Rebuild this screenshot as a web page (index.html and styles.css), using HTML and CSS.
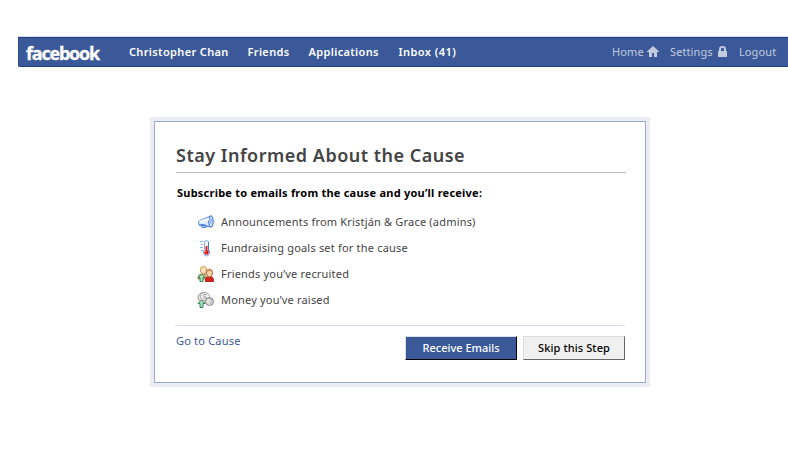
FILE: index.html
```html
<!DOCTYPE html>
<html lang="en">
<head>
<meta charset="utf-8">
<title>Facebook | Causes</title>
<link rel="stylesheet" href="styles.css">
</head>
<body>
<header class="navbar">
  <a class="logo">facebook</a>
  <nav class="primary">
    <a class="profile">Christopher Chan</a>
    <a class="friends">Friends</a>
    <a class="apps">Applications</a>
    <a class="inbox">Inbox (41)</a>
  </nav>
  <nav class="secondary">
    <a class="home"><span>Home</span><svg width="12" height="11" viewBox="0 0 12 11"><path d="M6 0l6 5.500V6h-2v5H7V7H5v4H2V6H0v-.5z"/></svg></a>
    <a class="settings"><span>Settings</span><svg width="9" height="11" viewBox="0 0 9 11"><path fill-rule="evenodd" d="M0 5h1V3q0-3 3.500-3T8 3v2h1v6H0zM3 5h3V3q0-1.300-1.500-1.300T3 3z"/></svg></a>
    <a class="logout"><span>Logout</span></a>
  </nav>
</header>
<main class="card">
  <div class="panel">
    <h1><span>Stay Informed About the Cause</span></h1>
    <h2><span>Subscribe to emails from the cause and you’ll receive:</span></h2>
    <ul>
      <li><svg width="18" height="18" viewBox="0 0 18 18"><path d="M1.500 8.500L5 6.500 13.500 3v11L8 12.500 2 12z" fill="#dceaff" stroke="#6e9ae8"/><path d="M4 11.500h4l1 3H5z" fill="#b9cff9" stroke="#638bd7"/><ellipse cx="14" cy="8.500" rx="2.200" ry="5.700" fill="#d4e3ff" stroke="#3262c4"/><path d="M3 9l9-3" stroke="#fff" stroke-width="2"/><path d="M2 12l10 1.500" stroke="#4777d2"/><path d="M14 5.500v5" stroke="#719cec"/></svg><span>Announcements from Kristján &amp; Grace (admins)</span></li>
      <li><svg width="18" height="18" viewBox="0 0 18 18"><path d="M3 2.500h3M4 5.500h2M3 8.500h3M4 11.500h2" stroke="#8cb4ef"/><path d="M7.500 2.500q2-2 4 0v8q1.500 1.500 1 4-.8 2.500-3 2.500t-3-2.500q-.5-2.500 1-4z" fill="#f1f6ff" stroke="#82a9e8"/><path d="M11.500 3v8l1 2" fill="none" stroke="#477ed1"/><path d="M9.500 7v7" stroke="#e4271b" stroke-width="2"/><circle cx="9.500" cy="13.500" r="2.300" fill="#d92017"/><path d="M8.500 12v1" stroke="#ff9c7c"/></svg><span>Fundraising goals set for the cause</span></li>
      <li><svg width="18" height="18" viewBox="0 0 18 18"><path d="M1 13q0-4 4-4h3l2 5H1z" fill="#e8bd75" stroke="#ae8147"/><path d="M8.500 16.500v-3q1-2 4-2h2q2 1 2 5z" fill="#d7241d" stroke="#b5231b"/><ellipse cx="6.500" cy="5" rx="3" ry="4" fill="#ffe2b8" stroke="#b98c50"/><path d="M3.500 5q0-4 3-4 3 0 3 3L7 3z" fill="#ecc88f"/><ellipse cx="12.500" cy="8" rx="3" ry="4" fill="#fbd2a8" stroke="#a66c45"/><path d="M9.500 7q0-3 3-3 3 0 3 3l-3-1z" fill="#cf9a64"/><path d="M4.500 9l3.500 3.500H6v4H3v-4H1z" fill="#a5e6bd" stroke="#39845f"/></svg><span>Friends you’ve recruited</span></li>
      <li><svg width="18" height="18" viewBox="0 0 18 18"><ellipse cx="6.500" cy="6.500" rx="5.500" ry="5" fill="#ddd" stroke="#999"/><ellipse cx="8" cy="5.500" rx="4.500" ry="4" fill="#f4f4f4" stroke="#aaa"/><path d="M10 3.500q-3-1-4 1 1 1 3 1.500 1 2-3 1" fill="none" stroke="#999"/><ellipse cx="12.500" cy="10.500" rx="4" ry="4" fill="#e2e2e2" stroke="#888"/><path d="M10 8l4-1 1 3-2 3" fill="none" stroke="#aaa"/><path d="M4.500 9l3.500 3.500H6v4H3v-4H1z" fill="#a5e6bd" stroke="#39845f"/></svg><span>Money you’ve raised</span></li>
    </ul>
    <footer>
      <a class="cause"><span>Go to Cause</span></a>
      <button class="receive"><span>Receive Emails</span></button>
      <button class="skip"><span>Skip this Step</span></button>
    </footer>
  </div>
</main>
</body>
</html>
```
FILE: styles.css
```css
* { box-sizing: border-box; }
body { margin: 0; padding: 36px 0 0 18px; height: 462px; overflow: hidden; background: #fff; font: 11px/16px "Noto Sans", sans-serif; }
.navbar { width: 770px; height: 31px; display: flex; align-items: center; background: #3b5998; border-top: 1px solid #d8dfea; border-bottom: 1px solid #1d4088; box-shadow: inset 0 1px #1d4088, inset 1px 0 #2c4c8e; border-bottom-left-radius: 2px; color: #fff; white-space: nowrap; }
.logo { width: 111px; padding: 3px 0 0 8px; font: bold 18px/24px "Open Sans", sans-serif; letter-spacing: -1.2px; -webkit-text-stroke: .3px #fff; }
.primary { display: flex; font-weight: 600; }
.profile { width: 119px; letter-spacing: .35px; }
.friends { width: 61px; margin-left: -.5px; letter-spacing: .35px; }
.apps { width: 90px; letter-spacing: .35px; }
.inbox { letter-spacing: .45px; }
.secondary { margin-left: auto; width: 176px; display: flex; color: #c2cce0; letter-spacing: .1px; }
.secondary a { display: flex; align-items: center; justify-content: space-between; }
.secondary svg { fill: #c2cce0; }
.home { width: 47px; margin-right: 11px; }
.settings { width: 57px; margin-right: 12px; }
.card { width: 500px; height: 270px; margin: 50px 0 0 132px; padding: 4px; background: #ecedf4; }
.panel { height: 262px; padding: 21px 19px 0 21px; background: #fff; border: 1px solid #9da9ce; }
h1 { height: 30px; margin: 0; border-bottom: 1px solid #bbb; color: #444; font-size: 18px; font-weight: 600; line-height: 24px; letter-spacing: .5px; white-space: nowrap; }
h2 { margin: 12px 0 0 1px; font-size: 11px; font-weight: 700; line-height: 16px; letter-spacing: .23px; color: #000; }
ul { list-style: none; margin: 8px 0 0 21px; padding: 0; color: #444; letter-spacing: .19px; }
li { height: 26px; display: flex; align-items: center; }
li svg { margin-right: 6px; }
footer { display: flex; height: 40px; margin: 12px 1px 0 -1px; padding: 10px 0 0 1px; border-top: 1px solid #d8dfea; }
.cause { width: 229px; line-height: 10px; color: #3b5998; letter-spacing: .2px; }
button { height: 24px; padding: 0; font: 500 11px/20px "Noto Sans", sans-serif; border: 1px solid; white-space: nowrap; }
.receive { width: 112px; margin-right: 6px; background: #3b5998; color: #fff; border-color: #d9dfea #000 #000 #d9dfea; }
.skip { width: 102px; background: #f0f0f0; color: #000; border-color: #ddd #666 #666 #ddd; letter-spacing: .1px; }
```
